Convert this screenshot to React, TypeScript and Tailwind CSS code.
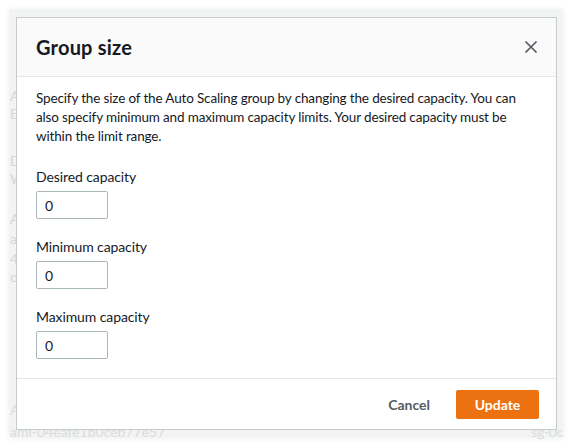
import React from 'react';

const font = { fontFamily: 'Lato, "Open Sans", sans-serif' };

const Field = ({ label, value }: { label: string; value: string }) => (
  <div className="flex flex-col">
    <label className="text-[14px] leading-[20px] tracking-[-0.1px] text-[#16191f]">{label}</label>
    <input
      readOnly
      value={value}
      className="mt-[4px] h-[28px] w-[72px] rounded-[2px] border border-[#aab7b8] bg-white px-[8px] text-[14px] text-[#16191f] outline-none"
    />
  </div>
);

export default function App() {
  return (
    <div className="relative h-[447px] w-[573px] overflow-hidden bg-white" style={font}>
      {/* faded page behind the dialog */}
      <div className="absolute left-[9px] top-[9px] h-[428px] w-[554px] bg-[#f2f3f3] shadow-[0_1px_6px_rgba(0,0,0,0.08)]">
        <div className="flex flex-col pl-[1px] pt-[78px] text-[14px] leading-[18px] text-[#d5d8d8]">
          <span>A</span>
          <span>E</span>
          <span className="mt-[29px]">D</span>
          <span>W</span>
          <span className="mt-[22px]">A</span>
          <span className="mt-[2px]">a</span>
          <span className="mt-[2px]">4</span>
          <span>o</span>
        </div>
        <div className="mt-[117px] flex pl-[1px] text-[14px] leading-[14px] text-[#dadddd]">
          <div className="flex w-[530px] flex-col gap-[8px]">
            <span>A</span>
            <span>ami-04eafe1b0ceb77e57</span>
          </div>
          <div className="flex flex-col gap-[8px] whitespace-nowrap tracking-[-0.3px]">
            <span>ri</span>
            <span>sg-0c</span>
          </div>
        </div>
      </div>

      {/* dialog */}
      <div className="absolute left-[16px] top-[17px] flex h-[413px] w-[541px] flex-col border border-[#c6cbcc] bg-white">
        <div className="flex h-[59px] items-center justify-between border-b border-[#e4e7e7] bg-[#fafafa] pl-[19px] pr-[18px]">
          <h2 className="text-[20px] font-bold tracking-[0.2px] text-[#16191f]">Group size</h2>
          <svg width="14" height="14" viewBox="0 0 14 14" fill="none" stroke="#545b64" strokeWidth="1.7">
            <path d="M1.5 1.5l11 11M12.5 1.5l-11 11" />
          </svg>
        </div>
        <div className="flex flex-1 flex-col gap-[18px] px-[19px] pt-[12px]">
          <p className="mb-[3px] text-[13.5px] leading-[19px] tracking-[-0.15px] text-[#16191f]">
            Specify the size of the Auto Scaling group by changing the desired capacity. You can also specify minimum and maximum capacity limits. Your desired capacity must be within the limit range.
          </p>
          <Field label="Desired capacity" value="0" />
          <Field label="Minimum capacity" value="0" />
          <Field label="Maximum capacity" value="0" />
        </div>
        <div className="flex h-[51px] items-center justify-end gap-[26px] border-t border-[#e4e7e7] pr-[17px]">
          <button className="text-[14px] font-bold text-[#545b64]">Cancel</button>
          <button className="h-[29px] w-[83px] rounded-[2px] bg-[#ec7211] text-[14px] font-bold text-white">Update</button>
        </div>
      </div>
    </div>
  );
}
